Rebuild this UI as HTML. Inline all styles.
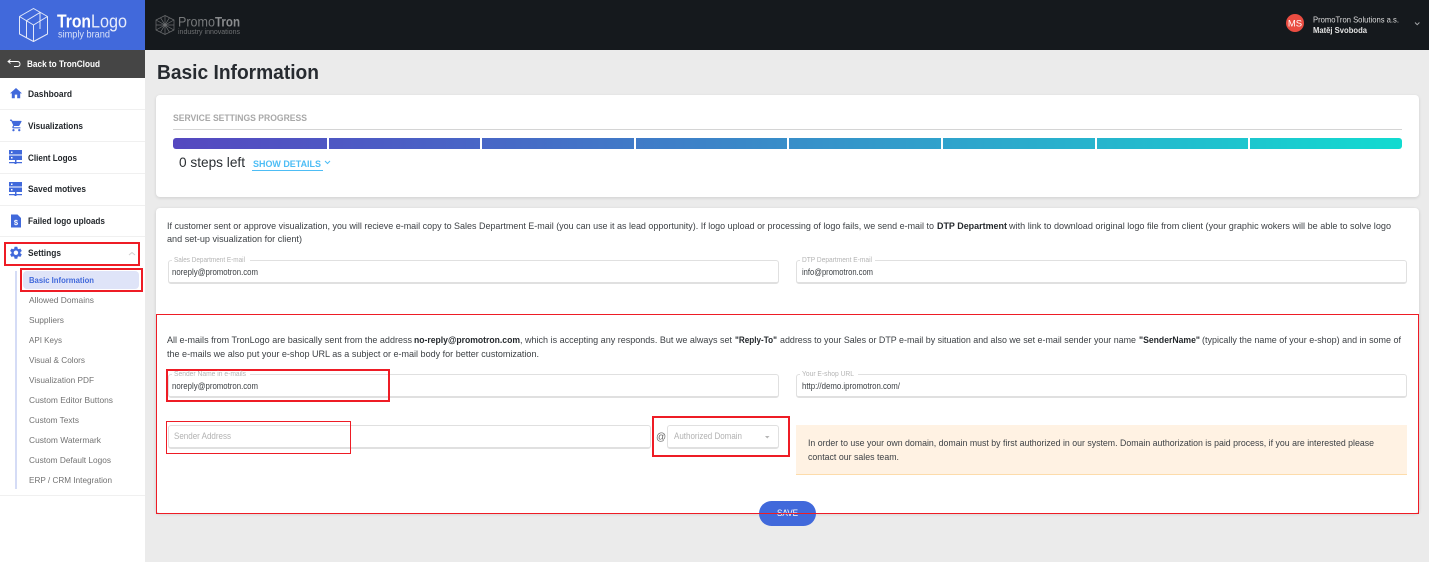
<!DOCTYPE html>
<html><head><meta charset="utf-8"><title>Basic Information</title>
<style>
html,body{margin:0;padding:0;width:1429px;height:562px;overflow:hidden;background:#ebebeb}
.a{position:absolute;box-sizing:border-box}
svg{position:absolute;left:0;top:0}
text{font-family:"Liberation Sans",sans-serif;white-space:pre}
.s{font-size:9.5px;fill:#3d4145}
.b{font-size:9.5px;font-weight:bold;fill:#25292d}
.m{font-size:9px;font-weight:bold;fill:#24282c}
.u{font-size:8.5px;fill:#727272}
.l{font-size:7.5px;fill:#b4b4b4}
.v{font-size:9px;fill:#3b3f43}
.p{font-size:9px;fill:#b2b2b2}
.i{border:1px solid #e0e0e0;border-bottom-width:2px;border-radius:3px;background:#fff}
.r{border:2px solid #ee1c25}
</style></head>
<body>
<div class="a" style="left:0;top:0;width:1429px;height:50px;background:#15191d"></div>
<div class="a" style="left:0;top:0;width:145px;height:50px;background:#4169db"></div>
<div class="a" style="left:0;top:50px;width:145px;height:28px;background:#454545"></div>
<div class="a" style="left:0;top:78px;width:145px;height:484px;background:#fff"></div>
<div class="a" style="left:0;top:109px;width:145px;height:1px;background:#f0f0f0"></div>
<div class="a" style="left:0;top:141px;width:145px;height:1px;background:#f0f0f0"></div>
<div class="a" style="left:0;top:173px;width:145px;height:1px;background:#f0f0f0"></div>
<div class="a" style="left:0;top:205px;width:145px;height:1px;background:#f0f0f0"></div>
<div class="a" style="left:0;top:236px;width:145px;height:1px;background:#f0f0f0"></div>
<div class="a" style="left:0;top:495px;width:145px;height:1px;background:#f0f0f0"></div>
<div class="a" style="left:15px;top:271px;width:2px;height:218px;background:#d5dcf6"></div>
<div class="a" style="left:23px;top:271px;width:116px;height:18px;background:#dfe4f8;border-radius:4px"></div>

<div class="a" style="left:156px;top:95px;width:1263px;height:102px;background:#fff;border-radius:4px;box-shadow:0 1px 3px rgba(0,0,0,.12)"></div>
<div class="a" style="left:156px;top:208px;width:1263px;height:305px;background:#fff;border-radius:4px;box-shadow:0 1px 3px rgba(0,0,0,.15)"></div>
<div class="a" style="left:173px;top:129px;width:1229px;height:1px;background:#d4d4d4"></div>
<div class="a" style="left:173px;top:138px;width:1229px;height:11px;border-radius:3px;background:linear-gradient(90deg,#5548c0 0%,#4866c6 25%,#3b86c8 45%,#2ea6cc 65%,#1fc2ce 85%,#12dbd0 100%)"></div>
<div class="a" style="left:327px;top:138px;width:2px;height:11px;background:#fff"></div>
<div class="a" style="left:480px;top:138px;width:2px;height:11px;background:#fff"></div>
<div class="a" style="left:634px;top:138px;width:2px;height:11px;background:#fff"></div>
<div class="a" style="left:787px;top:138px;width:2px;height:11px;background:#fff"></div>
<div class="a" style="left:941px;top:138px;width:2px;height:11px;background:#fff"></div>
<div class="a" style="left:1095px;top:138px;width:2px;height:11px;background:#fff"></div>
<div class="a" style="left:1248px;top:138px;width:2px;height:11px;background:#fff"></div>
<div class="a" style="left:252px;top:170px;width:71px;height:1px;background:#4dbdf5"></div>

<div class="a i" style="left:168px;top:260px;width:611px;height:24px"></div>
<div class="a i" style="left:796px;top:260px;width:611px;height:24px"></div>
<div class="a i" style="left:168px;top:374px;width:611px;height:24px"></div>
<div class="a i" style="left:796px;top:374px;width:611px;height:24px"></div>
<div class="a i" style="left:168px;top:425px;width:483px;height:24px"></div>
<div class="a i" style="left:667px;top:425px;width:112px;height:24px"></div>
<div class="a" style="left:172px;top:258px;width:78px;height:5px;background:#fff"></div>
<div class="a" style="left:800px;top:258px;width:75px;height:5px;background:#fff"></div>
<div class="a" style="left:172px;top:372px;width:78px;height:5px;background:#fff"></div>
<div class="a" style="left:800px;top:372px;width:58px;height:5px;background:#fff"></div>
<div class="a" style="left:796px;top:425px;width:611px;height:50px;background:#fff2e3;border-bottom:1px solid #fddcab"></div>

<div class="a" style="left:759px;top:501px;width:57px;height:25px;background:#4169db;border-radius:12.5px"></div>

<div class="a r" style="left:4px;top:242px;width:136px;height:24px"></div>
<div class="a r" style="left:20px;top:268px;width:123px;height:24px"></div>
<div class="a" style="left:156px;top:314px;width:1263px;height:200px;border:1.5px solid #ee1c25"></div>
<div class="a r" style="left:166px;top:369px;width:224px;height:33px"></div>
<div class="a" style="left:166px;top:421px;width:185px;height:33px;border:1.5px solid #ee1c25"></div>
<div class="a r" style="left:652px;top:416px;width:138px;height:41px"></div>

<svg width="1429" height="562" viewBox="0 0 1429 562">
<!-- TronLogo cube -->
<g fill="none" stroke="#fff" stroke-width="1" stroke-linejoin="round" opacity=".85">
<path d="M33.5 8.5L47.5 16.500V34L33.5 41.500L19.500 34V16.500Z"/>
<path d="M19.500 16.500L33.5 25L47.5 16.500M33.5 25V41.500M26.500 20.700V38M26.500 20.700L40 12.500M40 29V12.500"/>
</g>
<text x="57" y="27.500" font-size="18" font-weight="bold" fill="#fff" textLength="34" lengthAdjust="spacingAndGlyphs">Tron</text>
<text x="91" y="27.500" font-size="18" fill="#fff" opacity=".88" textLength="36" lengthAdjust="spacingAndGlyphs">Logo</text>
<text x="58" y="37.500" font-size="10" fill="#fff" opacity=".8" textLength="52" lengthAdjust="spacingAndGlyphs">simply brand</text>

<!-- PromoTron -->
<g fill="none" stroke="#6c6e70" stroke-width=".7">
<path d="M165 15.500L174 20V30L165 34.500L156 30V20Z"/>
<path d="M156 20L165 25L174 20M165 25V34.500M165 15.500V25M160.500 17.700L169.500 32.200M169.500 17.700L160.500 32.200M156 25H174M156 30L174 20M156 20L174 30"/>
</g>
<text x="178" y="26.500" font-size="13.500" fill="#77797b" textLength="37" lengthAdjust="spacingAndGlyphs">Promo</text>
<text x="215" y="26.500" font-size="13.500" font-weight="bold" fill="#8a8c8e" textLength="25" lengthAdjust="spacingAndGlyphs">Tron</text>
<text x="178" y="34" font-size="7" fill="#6f7173" textLength="62" lengthAdjust="spacingAndGlyphs">industry innovations</text>

<!-- user -->
<circle cx="1295" cy="23" r="9" fill="#ea4c41"/>
<text x="1295" y="26.500" font-size="9.500" fill="#fff" text-anchor="middle">MS</text>
<text x="1313" y="22.500" font-size="8.500" fill="#dcdcdc" textLength="86" lengthAdjust="spacingAndGlyphs">PromoTron Solutions a.s.</text>
<text x="1313" y="33" font-size="8.500" font-weight="bold" fill="#e4e4e4" textLength="54" lengthAdjust="spacingAndGlyphs">Matěj Svoboda</text>
<path d="M1415 22.500l2.200 2.200 2.200-2.200" fill="none" stroke="#a8aaac" stroke-width=".9"/>

<!-- back -->
<path d="M8 61.500H17Q20 61.500 20 64Q20 66.500 17.500 66.500H14M10.500 59.500L8 61.500 10.500 63.500" fill="none" stroke="#fff" stroke-width=".9"/>
<text x="27" y="67" font-size="9" font-weight="bold" fill="#fff" textLength="73" lengthAdjust="spacingAndGlyphs">Back to TronCloud</text>

<!-- nav icons -->
<g fill="#4169db">
<path transform="translate(8.800 86.200) scale(.6)" d="M10 20v-6h4v6h5v-8h3L12 3 2 12h3v8z"/>
<path transform="translate(9.400 118.500) scale(.58)" d="M7 18c-1.100 0-1.990.9-1.990 2S5.900 22 7 22s2-.9 2-2-.9-2-2-2zM1 2v2h2l3.600 7.590-1.350 2.450c-.16.28-.25.61-.25.96 0 1.100.9 2 2 2h12v-2H7.420c-.14 0-.25-.11-.25-.25l.03-.12.9-1.630h7.450c.75 0 1.410-.41 1.750-1.030l3.580-6.490c.08-.14.12-.31.12-.48 0-.55-.45-1-1-1H5.210l-.94-2H1zm16 16c-1.100 0-1.990.9-1.990 2s.89 2 1.990 2 2-.9 2-2-.9-2-2-2z"/>
<path fill-rule="evenodd" d="M9 150h13v4.500H9ZM11 151.500v1.500h1.500v-1.500ZM9 155.500h13v4.500H9ZM11 157v1.500h1.500V157ZM15 160h1.500v2H22v1.200h-5.500v.8H14.500v-.8H9V162h6Z"/>
<path fill-rule="evenodd" d="M9 182h13v4.500H9ZM11 183.500v1.500h1.500v-1.500ZM9 187.500h13v4.500H9ZM11 189v1.500h1.500V189ZM15 192h1.500v2H22v1.200h-5.500v.8H14.500v-.8H9V194h6Z"/>
<path fill-rule="evenodd" d="M11 214.500h6.500l3.500 3.500v9.500H11Z"/>
<text x="16" y="225" font-size="7.500" font-weight="bold" fill="#fff" text-anchor="middle">$</text>
<path transform="translate(8.500 245.300) scale(.62)" d="M19.140 12.940c.04-.3.06-.61.06-.94 0-.32-.02-.64-.07-.94l2.030-1.580c.18-.14.23-.41.12-.61l-1.920-3.320c-.12-.22-.37-.29-.59-.22l-2.390.96c-.5-.38-1.030-.7-1.620-.94l-.36-2.540c-.04-.24-.24-.41-.48-.41h-3.840c-.24 0-.43.17-.47.41l-.36 2.540c-.59.24-1.130.57-1.620.94l-2.390-.96c-.22-.08-.47 0-.59.22L2.740 8.870c-.12.21-.08.47.12.61l2.030 1.580c-.05.3-.09.63-.09.94s.02.64.07.94l-2.030 1.580c-.18.14-.23.41-.12.61l1.920 3.320c.12.22.37.29.59.22l2.390-.96c.5.38 1.030.7 1.620.94l.36 2.540c.05.24.24.41.48.41h3.840c.24 0 .44-.17.47-.41l.36-2.540c.59-.24 1.130-.56 1.620-.94l2.390.96c.22.08.47 0 .59-.22l1.920-3.320c.12-.22.07-.47-.12-.61l-2.010-1.580zM12 15.600c-1.980 0-3.600-1.620-3.600-3.600s1.620-3.600 3.600-3.600 3.600 1.620 3.600 3.600-1.620 3.600-3.600 3.600z"/>
</g>
<text class="m" x="28" y="97" textLength="44" lengthAdjust="spacingAndGlyphs">Dashboard</text>
<text class="m" x="28" y="129" textLength="55" lengthAdjust="spacingAndGlyphs">Visualizations</text>
<text class="m" x="28" y="161" textLength="49" lengthAdjust="spacingAndGlyphs">Client Logos</text>
<text class="m" x="28" y="192" textLength="58" lengthAdjust="spacingAndGlyphs">Saved motives</text>
<text class="m" x="28" y="224" textLength="77" lengthAdjust="spacingAndGlyphs">Failed logo uploads</text>
<text class="m" x="28" y="256" textLength="33" lengthAdjust="spacingAndGlyphs">Settings</text>
<path d="M129 255l3-2.500 3 2.500" fill="none" stroke="#d0d0d0" stroke-width="1"/>
<text x="29" y="283" font-size="8.500" font-weight="bold" fill="#4169db" textLength="65" lengthAdjust="spacingAndGlyphs">Basic Information</text>
<text class="u" x="29" y="303" textLength="65" lengthAdjust="spacingAndGlyphs">Allowed Domains</text>
<text class="u" x="29" y="323" textLength="35" lengthAdjust="spacingAndGlyphs">Suppliers</text>
<text class="u" x="29" y="343" textLength="33" lengthAdjust="spacingAndGlyphs">API Keys</text>
<text class="u" x="29" y="363" textLength="56" lengthAdjust="spacingAndGlyphs">Visual &amp; Colors</text>
<text class="u" x="29" y="383" textLength="65" lengthAdjust="spacingAndGlyphs">Visualization PDF</text>
<text class="u" x="29" y="403" textLength="84" lengthAdjust="spacingAndGlyphs">Custom Editor Buttons</text>
<text class="u" x="29" y="423" textLength="50" lengthAdjust="spacingAndGlyphs">Custom Texts</text>
<text class="u" x="29" y="443" textLength="72" lengthAdjust="spacingAndGlyphs">Custom Watermark</text>
<text class="u" x="29" y="463" textLength="82" lengthAdjust="spacingAndGlyphs">Custom Default Logos</text>
<text class="u" x="29" y="483" textLength="83" lengthAdjust="spacingAndGlyphs">ERP / CRM Integration</text>

<text x="157" y="79" font-size="20" font-weight="bold" fill="#272b30" textLength="162" lengthAdjust="spacingAndGlyphs">Basic Information</text>
<text x="173" y="121" font-size="9" font-weight="bold" fill="#a8a8a8" textLength="134" lengthAdjust="spacingAndGlyphs">SERVICE SETTINGS PROGRESS</text>
<text x="179" y="167" font-size="14" fill="#2a2e32" textLength="66" lengthAdjust="spacingAndGlyphs">0 steps left</text>
<text x="253" y="167" font-size="9" font-weight="bold" fill="#4dbdf5" textLength="68" lengthAdjust="spacingAndGlyphs">SHOW DETAILS</text>
<path d="M325 161l2.500 2.500 2.500-2.500" fill="none" stroke="#4dbdf5" stroke-width="1"/>

<text class="s" x="167" y="229" textLength="767" lengthAdjust="spacingAndGlyphs">If customer sent or approve visualization, you will recieve e-mail copy to Sales Department E-mail (you can use it as lead opportunity). If logo upload or processing of logo fails, we send e-mail to</text>
<text class="b" x="937" y="229" textLength="70" lengthAdjust="spacingAndGlyphs">DTP Department</text>
<text class="s" x="1009" y="229" textLength="382" lengthAdjust="spacingAndGlyphs">with link to download original logo file from client (your graphic wokers will be able to solve logo</text>
<text class="s" x="167" y="242" textLength="135" lengthAdjust="spacingAndGlyphs">and set-up visualization for client)</text>
<text class="l" x="174" y="262" textLength="71" lengthAdjust="spacingAndGlyphs">Sales Department E-mail</text>
<text class="v" x="172" y="275" textLength="86" lengthAdjust="spacingAndGlyphs">noreply@promotron.com</text>
<text class="l" x="802" y="262" textLength="70" lengthAdjust="spacingAndGlyphs">DTP Department E-mail</text>
<text class="v" x="802" y="275" textLength="71" lengthAdjust="spacingAndGlyphs">info@promotron.com</text>

<text class="s" x="167" y="343" textLength="245" lengthAdjust="spacingAndGlyphs">All e-mails from TronLogo are basically sent from the address</text>
<text class="b" x="414" y="343" textLength="106" lengthAdjust="spacingAndGlyphs">no-reply@promotron.com</text>
<text class="s" x="520" y="343" textLength="212" lengthAdjust="spacingAndGlyphs">, which is accepting any responds. But we always set</text>
<text class="b" x="735" y="343" textLength="42" lengthAdjust="spacingAndGlyphs">"Reply-To"</text>
<text class="s" x="780" y="343" textLength="356" lengthAdjust="spacingAndGlyphs">address to your Sales or DTP e-mail by situation and also we set e-mail sender your name</text>
<text class="b" x="1139" y="343" textLength="61" lengthAdjust="spacingAndGlyphs">"SenderName"</text>
<text class="s" x="1202" y="343" textLength="199" lengthAdjust="spacingAndGlyphs">(typically the name of your e-shop) and in some of</text>
<text class="s" x="167" y="357" textLength="372" lengthAdjust="spacingAndGlyphs">the e-mails we also put your e-shop URL as a subject or e-mail body for better customization.</text>
<text class="l" x="174" y="376" textLength="72" lengthAdjust="spacingAndGlyphs">Sender Name in e-mails</text>
<text class="v" x="172" y="389" textLength="86" lengthAdjust="spacingAndGlyphs">noreply@promotron.com</text>
<text class="l" x="802" y="376" textLength="52" lengthAdjust="spacingAndGlyphs">Your E-shop URL</text>
<text class="v" x="802" y="389" textLength="98" lengthAdjust="spacingAndGlyphs">http://demo.ipromotron.com/</text>
<text class="p" x="174" y="439" textLength="57" lengthAdjust="spacingAndGlyphs">Sender Address</text>
<text x="656" y="440" font-size="10" fill="#666">@</text>
<text class="p" x="674" y="439" textLength="68" lengthAdjust="spacingAndGlyphs">Authorized Domain</text>
<path d="M765 436h4.500l-2.250 2.500Z" fill="#b5b5b5"/>
<text class="s" x="808" y="446" textLength="566" lengthAdjust="spacingAndGlyphs">In order to use your own domain, domain must by first authorized in our system. Domain authorization is paid process, if you are interested please</text>
<text class="s" x="808" y="460" textLength="91" lengthAdjust="spacingAndGlyphs">contact our sales team.</text>
<text x="777" y="516" font-size="9" fill="#fff" textLength="21" lengthAdjust="spacingAndGlyphs">SAVE</text>
</svg>
<div class="a" style="left:759px;top:512.500px;width:57px;height:1px;background:#ee1c25"></div>
</body></html>
